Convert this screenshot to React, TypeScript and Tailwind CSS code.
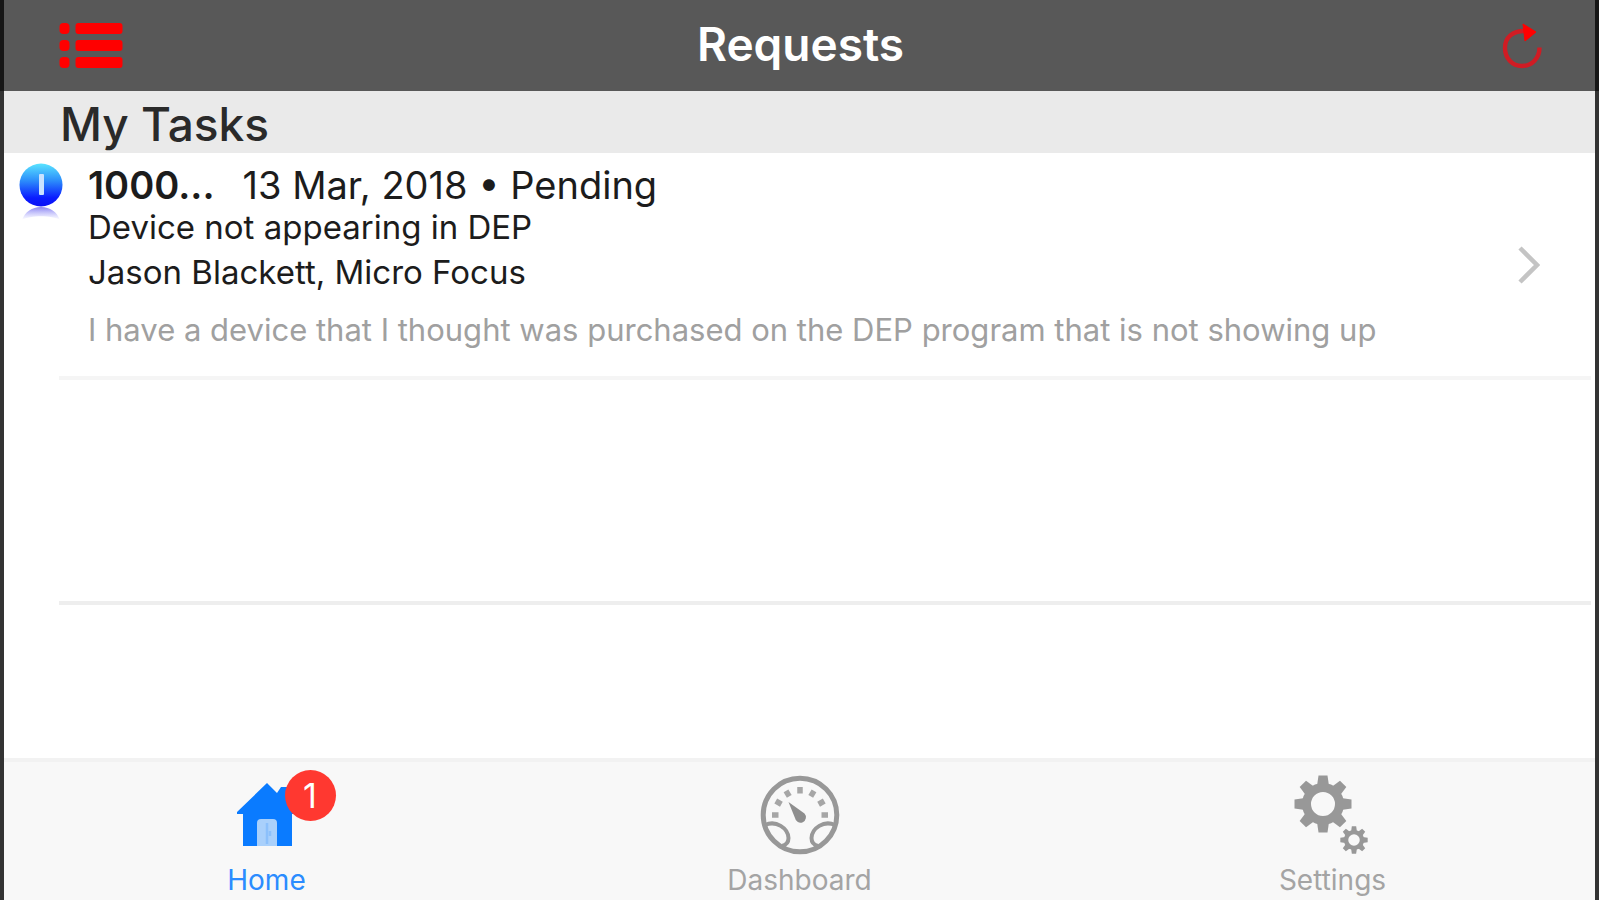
import React from "react";

const TICKS = [-90, -60, -30, 0, 30, 60, 90];
const TEETH = [0, 45, 90, 135, 180, 225, 270, 315];

function ListIcon() {
  return (
    <svg width="64" height="46" viewBox="0 0 64 46" fill="#ff0000" aria-hidden="true">
      {[0, 17, 34].map((y) => (
        <g key={y}>
          <rect x="0.5" y={y} width="10" height="11" rx="4" />
          <rect x="16.5" y={y} width="47" height="11" rx="3" />
        </g>
      ))}
    </svg>
  );
}

function RefreshIcon() {
  return (
    <svg width="40" height="46" viewBox="0 0 40 46" aria-hidden="true">
      <path d="M22 8 C11 8 3 14 3 25 C3 35 10 43 20 43 C30 43 37.500 35 37.500 24.500" fill="none" stroke="#d01c24" strokeWidth="4.4" />
      <path d="M21 1 L34 9 L23 18 Z" fill="#ff0000" stroke="#ff0000" strokeWidth="1" strokeLinejoin="round" />
    </svg>
  );
}

function PriorityIcon() {
  return (
    <svg width="44" height="60" viewBox="0 0 44 60" role="img" aria-label="Incident">
      <defs>
        <linearGradient id="orb" x1="0" y1="0" x2="0" y2="1">
          <stop offset="0" stopColor="#5ae4ff" />
          <stop offset="0.4" stopColor="#2c8dfb" />
          <stop offset="0.8" stopColor="#0a1cff" />
          <stop offset="1" stopColor="#0a10f5" />
        </linearGradient>
        <linearGradient id="shine" x1="0" y1="0" x2="0" y2="1">
          <stop offset="0" stopColor="#5a50ea" stopOpacity="0.7" />
          <stop offset="1" stopColor="#8c8cff" stopOpacity="0" />
        </linearGradient>
      </defs>
      <path d="M3 57 C6 49 13 44 22 44 C31 44 38 49 41 57 C33 52 11 52 3 57 Z" fill="url(#shine)" />
      <circle cx="22" cy="22" r="21.5" fill="url(#orb)" />
      <rect x="20" y="11" width="5" height="21" rx="1" fill="#c9e2ff" />
    </svg>
  );
}

function HomeIcon() {
  return (
    <svg width="60" height="66" viewBox="0 0 60 66" aria-hidden="true">
      <path
        d="M30 1 L40 11 L44 5 H50 V20 L60 30 V32 H55 V64 H6 V32 H0 V30 Z"
        fill="#0a7bff"
      />
      <path d="M20 64 V41 Q20 37 24 37 H36 Q40 37 40 41 V64 Z" fill="#a9d0fb" />
      <path d="M30 41 V62 M33 49 V54" stroke="#8cc0fb" strokeWidth="2.5" />
    </svg>
  );
}

function GaugeIcon() {
  return (
    <svg width="80" height="80" viewBox="0 0 80 80" fill="none" stroke="#989898" aria-hidden="true">
      <circle cx="40" cy="40" r="36.8" strokeWidth="5" />
      {TICKS.map((a) => (
        <path key={a} d="M40 12 V18.5" strokeWidth="5.5" stroke="#a6a6a6" transform={`rotate(${a} 40 40)`} />
      ))}
      <path d="M5 50 C16 45 28 53 28.500 63 C28.500 67 26 70 22 71" strokeWidth="4" />
      <path d="M75 50 C64 45 52 53 51.500 63 C51.500 67 54 70 58 71" strokeWidth="4" />
      <path d="M28.500 27 L44.500 38.500 A5.500 5.500 0 1 1 35 43 Z" fill="#8e8e8e" stroke="none" />
    </svg>
  );
}

function Gear({ cx, cy, size }: { cx: number; cy: number; size: number }) {
  return (
    <g transform={`translate(${cx} ${cy}) scale(${size})`}>
      <circle r="16.500" fill="none" stroke="#989898" strokeWidth="9" />
      {TEETH.map((a) => (
        <path key={a} d="M-6 -18 L-4.500 -28.500 H4.500 L6 -18 Z" fill="#989898" transform={`rotate(${a})`} />
      ))}
    </g>
  );
}

function GearsIcon() {
  return (
    <svg width="78" height="80" viewBox="0 0 78 80" aria-hidden="true">
      <Gear cx={29} cy={29} size={1} />
      <Gear cx={60} cy={65} size={0.48} />
    </svg>
  );
}

function Tab({ label, active, badge, children }: {
  label: string;
  active?: boolean;
  badge?: number;
  children: React.ReactNode;
}) {
  return (
    <button
      type="button"
      aria-current={active ? "page" : undefined}
      className={`flex flex-1 flex-col items-center ${active ? "text-[#2b8cff]" : "text-[#a4a4a4]"}`}
    >
      <span className="relative flex h-[90px] items-center pt-4">
        {children}
        {badge !== undefined && (
          <span className="absolute left-12 top-2 flex size-[51px] items-center justify-center rounded-full bg-[#ff3830] text-[34px] leading-none text-white">
            {badge}
          </span>
        )}
      </span>
      <span className="mt-3 text-[28px] leading-8">{label}</span>
    </button>
  );
}

export default function App() {
  return (
    <div className="flex min-h-screen flex-col border-x-4 border-[#333333] bg-white font-['Inter',sans-serif] text-[#1c1c1c]">
      <header className="-mx-1 flex h-[91px] items-center justify-between border-x-4 border-[#161616] bg-[#585858] pl-[55px] pr-[53px]">
        <button type="button" aria-label="Menu" className="w-16">
          <ListIcon />
        </button>
        <h1 className="pb-1 text-[46px] font-semibold leading-none text-white">Requests</h1>
        <button type="button" aria-label="Refresh" className="flex w-16 justify-end">
          <RefreshIcon />
        </button>
      </header>

      <main className="flex flex-1 flex-col">
        <h2 className="flex h-[62px] items-center bg-[#eaeaea] pl-14 pt-1 text-[46px] font-medium leading-none text-[#2a2a2a]">
          My Tasks
        </h2>
        <ul>
          <li>
            <a href="#request" className="flex h-[223px] pl-[15px] pr-[55px]">
              <span className="pt-[10px]">
                <PriorityIcon />
              </span>
              <span className="flex flex-1 flex-col pl-[25px] pt-2">
                <span className="flex gap-7 text-[38px] leading-[48px]">
                  <span className="font-semibold">1000...</span>
                  <span>13 Mar, 2018 • Pending</span>
                </span>
                <span className="text-[33px] leading-9">Device not appearing in DEP</span>
                <span className="pt-1 text-[33px] leading-[46px]">Jason Blackett, Micro Focus</span>
                <span className="pt-2 text-[31px] leading-[54px] text-[#a0a0a0]">
                  I have a device that I thought was purchased on the DEP program that is not showing up
                </span>
              </span>
              <svg className="self-center" width="22" height="38" viewBox="0 0 22 38" fill="none" aria-hidden="true">
                <path d="M2 2 L19 19 L2 36" stroke="#c4c4c4" strokeWidth="4.5" />
              </svg>
            </a>
            <hr className="ml-[55px] mr-1 border-t-4 border-[#f5f5f5]" />
          </li>
          <li>
            <div className="h-[221px]" />
            <hr className="ml-[55px] mr-1 border-t-4 border-[#eeeeee]" />
          </li>
        </ul>
      </main>

      <nav className="h-[142px] border-t-4 border-[#f2f2f2] bg-[#f8f8f8]">
        <div className="-mx-1 flex">
          <Tab label="Home" active badge={1}>
            <HomeIcon />
          </Tab>
          <Tab label="Dashboard">
            <GaugeIcon />
          </Tab>
          <Tab label="Settings">
            <GearsIcon />
          </Tab>
        </div>
      </nav>
    </div>
  );
}
